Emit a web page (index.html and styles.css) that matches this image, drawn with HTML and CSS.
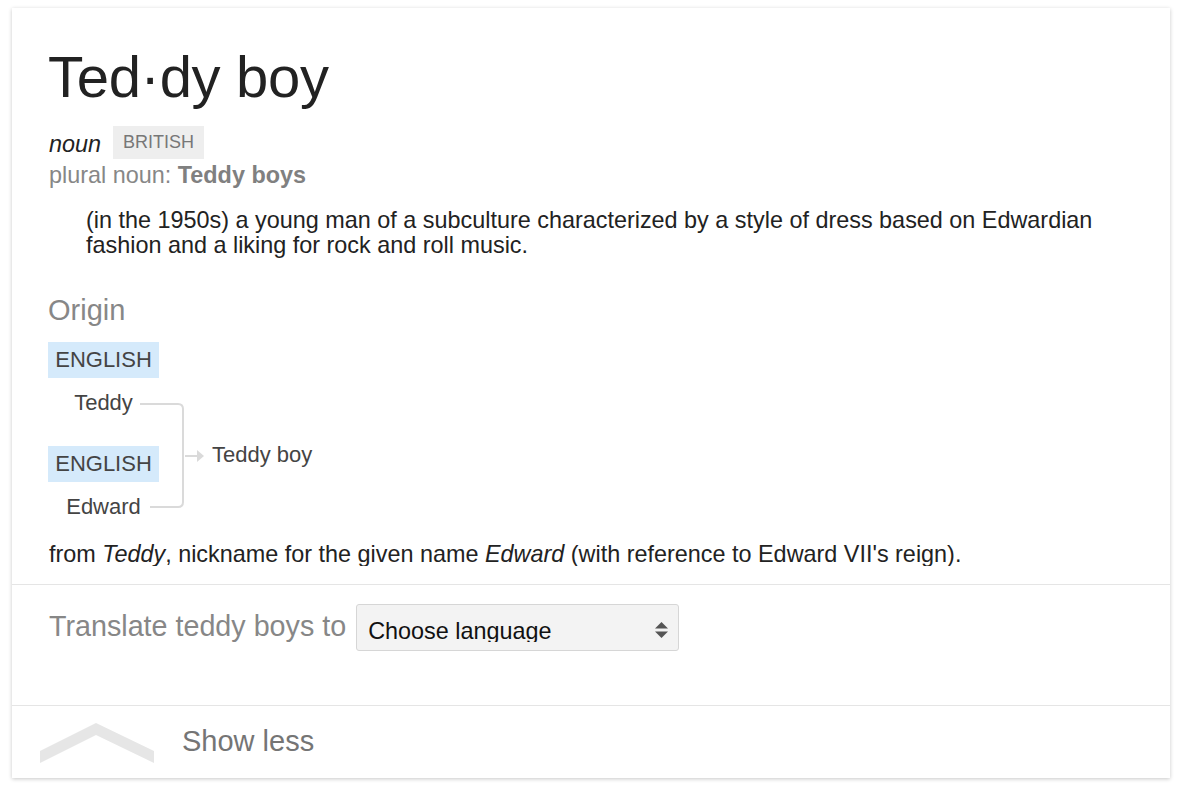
FILE: index.html
```html
<!DOCTYPE html>
<html>
<head>
<meta charset="utf-8">
<link rel="stylesheet" href="styles.css">
</head>
<body>
<div class="card">
  <div class="main">
    <h1 class="title">Ted·dy boy</h1>
    <div class="pos-row"><span class="pos">noun</span><span class="tag">BRITISH</span></div>
    <div class="plural">plural noun: <b>Teddy boys</b></div>
    <div class="definition">(in the 1950s) a young man of a subculture characterized by a style of dress based on Edwardian fashion and a liking for rock and roll music.</div>
    <div class="origin-head">Origin</div>
    <div class="etym">
      <div class="etym-col">
        <div class="lang">ENGLISH</div>
        <div class="word">Teddy</div>
        <div class="lang">ENGLISH</div>
        <div class="word last">Edward</div>
      </div>
      <svg class="etym-lines" width="170" height="182" viewBox="0 0 170 182">
        <path d="M92 62 H130 Q135 62 135 67 V160 Q135 165 130 165 H102" fill="none" stroke="#dadada" stroke-width="2"/>
        <path d="M137 114 H151" fill="none" stroke="#dadada" stroke-width="2"/>
        <path d="M149 108 L156 114 L149 120 Z" fill="#dadada"/>
      </svg>
      <div class="result">Teddy boy</div>
    </div>
    <div class="from"><span class="from-text">from <i>Teddy</i>, nickname for the given name <i>Edward</i> (with reference to Edward VII's reign).</span></div>
  </div>
  <div class="translate">
    <span class="tr-label">Translate teddy boys to</span>
    <div class="select">
      <span class="select-text">Choose language</span>
      <svg class="select-arrows" width="13" height="16" viewBox="0 0 13 16">
        <path d="M6.5 0 L13 6.5 H0 Z" fill="#555"/>
        <path d="M6.5 16 L13 9.5 H0 Z" fill="#555"/>
      </svg>
    </div>
  </div>
  <div class="showless">
    <svg class="chevron" width="116" height="44" viewBox="0 0 116 44">
      <path d="M0 28 L56 0 L114 28 L114 40 L56 12 L0 40 Z" fill="#e6e6e6"/>
    </svg>
    <span class="sl-text">Show less</span>
  </div>
</div>
</body>
</html>
```
FILE: styles.css
```css
html, body {
  margin: 0;
  padding: 0;
  background: #fff;
}
body {
  padding: 8px 12px;
  font-family: "Liberation Sans", Arial, sans-serif;
  color: #222;
}
.card {
  background: #fff;
  height: 770px;
  box-shadow: 0 1px 4px rgba(0,0,0,0.22);
  display: flex;
  flex-direction: column;
}
.main {
  padding: 37px 36px 0 36px;
  border-bottom: 1px solid #e5e5e5;
}
.title {
  margin: 0;
  font-weight: normal;
  font-size: 58px;
  line-height: 64px;
  color: #222;
  letter-spacing: -0.3px;
}
.pos-row {
  margin-top: 17px;
  display: flex;
  align-items: flex-start;
  height: 33px;
}
.pos {
  font-style: italic;
  font-size: 23.4px;
  line-height: 33px;
  padding-top: 2px;
  color: #222;
  padding-left: 1px;
}
.tag {
  margin-left: 12px;
  background: #eee;
  color: #777;
  font-size: 18px;
  line-height: 33px;
  padding: 0 10px;
}
.plural {
  margin-top: 3px;
  font-size: 23.4px;
  line-height: 26px;
  color: #878787;
  padding-left: 1px;
}
.plural b {
  color: #808080;
}
.definition {
  margin-top: 20px;
  padding-left: 38px;
  font-size: 23.4px;
  line-height: 25px;
  color: #222;
}
.origin-head {
  margin-top: 36px;
  font-size: 29px;
  line-height: 32px;
  color: #878787;
}
.etym {
  position: relative;
  display: flex;
  align-items: flex-start;
  margin-top: 16px;
  height: 182px;
}
.etym-col {
  width: 111px;
  display: flex;
  flex-direction: column;
  text-align: center;
  font-size: 22px;
  color: #444;
}
.lang {
  background: #d5eafb;
  line-height: 36px;
  height: 36px;
  color: #444;
}
.word {
  padding-top: 7px;
  line-height: 36px;
  margin-bottom: 25px;
}
.word.last {
  margin-bottom: 0;
}
.etym-lines {
  position: absolute;
  left: 0;
  top: 0;
}
.result {
  margin-left: 53px;
  margin-top: 100px;
  font-size: 22px;
  line-height: 26px;
  color: #444;
}
.from {
  margin-top: 17px;
  margin-bottom: 18px;
  height: 25px;
  overflow: hidden;
  padding-left: 1px;
}
.from-text {
  font-size: 23.4px;
  line-height: 26px;
  color: #222;
}
.translate {
  height: 121px;
  border-bottom: 1px solid #e5e5e5;
  padding: 19px 36px 0 37px;
  display: flex;
  align-items: flex-start;
  box-sizing: border-box;
}
.tr-label {
  margin-top: 4px;
  font-size: 28.7px;
  line-height: 36px;
  color: #878787;
}
.select {
  margin-left: 10px;
  width: 323px;
  height: 47px;
  box-sizing: border-box;
  background: #f3f3f3;
  border: 1px solid #d6d6d6;
  border-radius: 3px;
  display: flex;
  align-items: flex-start;
  justify-content: space-between;
  padding: 0 10px 0 11px;
}
.select-text {
  display: block;
  font-size: 23.4px;
  line-height: 26px;
  height: 37px;
  padding-top: 13px;
  box-sizing: border-box;
  overflow: hidden;
  color: #111;
}
.select-arrows {
  margin-top: 17px;
}
.showless {
  flex: 1;
  display: flex;
  align-items: flex-start;
  padding-left: 28px;
}
.chevron {
  margin-top: 17px;
}
.sl-text {
  margin-left: 26px;
  margin-top: 17px;
  font-size: 29px;
  line-height: 36px;
  color: #757575;
}
```
